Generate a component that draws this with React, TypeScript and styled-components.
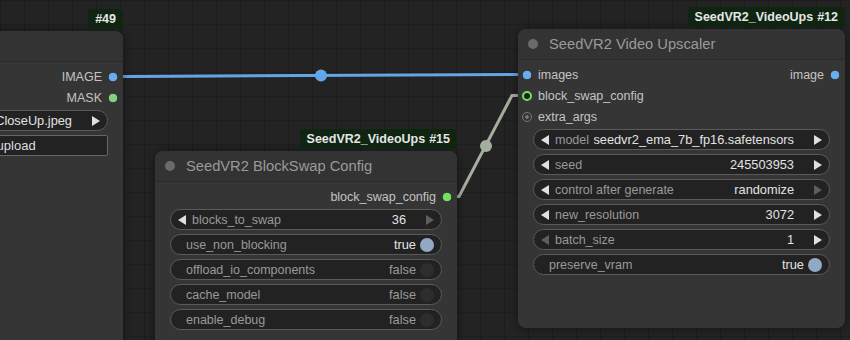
import React from 'react';
import styled, { createGlobalStyle } from 'styled-components';

const GlobalStyle = createGlobalStyle`
  html, body { margin: 0; padding: 0; background: #222; }
  body { font-family: "Liberation Sans", Arial, sans-serif; }
`;

const Canvas = styled.div`
  position: relative;
  width: 850px;
  height: 340px;
  overflow: hidden;
  background-color: #232323;
  background-image:
    linear-gradient(to right, rgba(0, 0, 0, 0.2) 1px, transparent 1px),
    linear-gradient(to bottom, rgba(0, 0, 0, 0.14) 1px, transparent 1px);
  background-size: 24px 24px;
`;

const Links = styled.svg`
  position: absolute;
  inset: 0;
`;

const Node = styled.div<{ $x: number; $y: number; $w: number; $h: number }>`
  position: absolute;
  left: ${p => p.$x}px;
  top: ${p => p.$y}px;
  width: ${p => p.$w}px;
  height: ${p => p.$h}px;
  background: #353535;
  border-radius: 8px;
  box-shadow: 0 0 8px rgba(0, 0, 0, 0.45);
  display: flex;
  flex-direction: column;
`;

const Badge = styled.div`
  position: absolute;
  right: 0;
  bottom: calc(100% + 2px);
  height: 20px;
  padding: 0 7px;
  display: flex;
  align-items: center;
  gap: 4px;
  background: #0f2411;
  border-radius: 4px 4px 0 0;
  color: #e6e6e6;
  font-size: 12.5px;
  font-weight: bold;
  white-space: nowrap;
`;

const TitleBar = styled.div`
  height: 30px;
  flex: none;
  display: flex;
  align-items: center;
  gap: 11px;
  padding-left: 10px;
  background: #333;
  border-bottom: 1px solid #2a2a2a;
  border-radius: 8px 8px 0 0;
  color: #9a9a9a;
  font-size: 14.7px;
  white-space: nowrap;
`;

const TitleDot = styled.span`
  width: 10px;
  height: 10px;
  border-radius: 50%;
  background: #6a6a6a;
`;

const Slots = styled.div`
  padding-top: 4px;
  display: flex;
  flex-direction: column;
`;

const SlotRow = styled.div`
  height: 21px;
  display: flex;
  align-items: center;
  justify-content: space-between;
  font-size: 12.5px;
  color: #c4c4c4;
`;

const SlotIn = styled.div`
  display: flex;
  align-items: center;
  gap: 6px;
  padding-left: 4px;
`;

const SlotOut = styled.div`
  margin-left: auto;
  display: flex;
  align-items: center;
  gap: 6px;
  padding-right: 5px;
`;

type DotKind = 'image' | 'mask' | 'config' | 'configOut' | 'optional';

const dotStyles: Record<DotKind, string> = {
  image: 'background: radial-gradient(circle, #68aeee 0 4px, transparent 4.6px);',
  mask: 'background: radial-gradient(circle, #7ed47e 0 4px, transparent 4.6px);',
  configOut: 'background: radial-gradient(circle, #72e25e 0 4px, transparent 4.6px);',
  config: 'border: 2.5px solid #72e25e; background: #1e1e1e;',
  optional: 'border: 1px solid #787878; background: radial-gradient(circle, #787878 0 1.5px, transparent 2px);',
};

const SlotDot = styled.span<{ $kind: DotKind }>`
  width: 10px;
  height: 10px;
  box-sizing: border-box;
  border-radius: 50%;
  ${p => dotStyles[p.$kind]}
`;

const Widgets = styled.div`
  padding: 2px 15px 0;
  display: flex;
  flex-direction: column;
  gap: 4px;
`;

const Widget = styled.div`
  height: 21px;
  box-sizing: border-box;
  border: 1px solid #5a5a5a;
  border-radius: 11px;
  background: #222;
  display: flex;
  align-items: center;
  padding: 0 7px;
  font-size: 12.5px;
  white-space: nowrap;
  overflow: hidden;
`;

const ToggleRow = styled(Widget)`
  padding: 0 7px 0 15px;
`;

const UploadButton = styled.div`
  height: 21px;
  box-sizing: border-box;
  border: 1px solid #666;
  border-radius: 2px;
  background: #222;
  display: flex;
  align-items: center;
  justify-content: center;
  color: #ddd;
  font-size: 13px;
  white-space: nowrap;
`;

const Arrow = styled.span<{ $dir: 'left' | 'right'; $dim?: boolean }>`
  flex: none;
  width: 0;
  height: 0;
  border-top: 5px solid transparent;
  border-bottom: 5px solid transparent;
  ${p =>
    p.$dir === 'left'
      ? `border-right: 8px solid ${p.$dim ? '#5e5e5e' : '#e0e0e0'};`
      : `border-left: 8px solid ${p.$dim ? '#5e5e5e' : '#e0e0e0'};`}
`;

const Label = styled.span<{ $afterArrow?: boolean }>`
  flex: none;
  color: #999;
  margin-left: ${p => (p.$afterArrow ? 6 : 0)}px;
`;

const Value = styled.span<{ $muted?: boolean; $gap?: number }>`
  margin-left: auto;
  padding-left: 4px;
  margin-right: ${p => p.$gap ?? 20}px;
  color: ${p => (p.$muted ? '#9a9a9a' : '#e2e2e2')};
  font-size: 12.8px;
  min-width: 0;
  overflow: hidden;
`;

const Knob = styled.span<{ $on: boolean }>`
  flex: none;
  width: 14px;
  height: 14px;
  border-radius: 50%;
  background: ${p => (p.$on ? '#92a9c6' : '#2d2d2d')};
`;

type NumberProps = { label: string; value: string; dimLeft?: boolean; dimRight?: boolean };

const NumberWidget = ({ label, value, dimLeft, dimRight }: NumberProps) => (
  <Widget>
    <Arrow $dir="left" $dim={dimLeft} />
    <Label $afterArrow>{label}</Label>
    <Value>{value}</Value>
    <Arrow $dir="right" $dim={dimRight} />
  </Widget>
);

const Toggle = ({ label, on }: { label: string; on: boolean }) => (
  <ToggleRow>
    <Label>{label}</Label>
    <Value $muted={!on} $gap={4}>{on ? 'true' : 'false'}</Value>
    <Knob $on={on} />
  </ToggleRow>
);

const App = () => {
  return (
    <Canvas>
      <GlobalStyle />
      <Links width={850} height={340} viewBox="0 0 850 340">
        <path d="M115 76.5 L130 76.5 L512 74.5 L527 74.5" stroke="#62a6e6" strokeWidth={3} fill="none" />
        <circle cx={321} cy={75.5} r={6} fill="#62a6e6" />
        <path d="M448 196.5 L459 196.5 L512 95.5 L527 95.5" stroke="#a4ae9e" strokeWidth={3} fill="none" />
        <circle cx={486} cy={146} r={6} fill="#a4ae9e" />
      </Links>

      <Node $x={-171} $y={31} $w={294} $h={330}>
        <Badge>#49</Badge>
        <TitleBar>
          <TitleDot />
          Load Image
        </TitleBar>
        <Slots>
          <SlotRow>
            <SlotOut>IMAGE<SlotDot $kind="image" /></SlotOut>
          </SlotRow>
          <SlotRow>
            <SlotOut>MASK<SlotDot $kind="mask" /></SlotOut>
          </SlotRow>
        </Slots>
        <Widgets>
          <NumberWidget label="image" value="portrait_CloseUp.jpeg" />
          <UploadButton>choose file to upload</UploadButton>
        </Widgets>
      </Node>

      <Node $x={155} $y={151} $w={302} $h={210}>
        <Badge>SeedVR2_VideoUps <span>#15</span></Badge>
        <TitleBar>
          <TitleDot />
          SeedVR2 BlockSwap Config
        </TitleBar>
        <Slots>
          <SlotRow>
            <SlotOut>block_swap_config<SlotDot $kind="configOut" /></SlotOut>
          </SlotRow>
        </Slots>
        <Widgets>
          <NumberWidget label="blocks_to_swap" value="36" dimRight />
          <Toggle label="use_non_blocking" on />
          <Toggle label="offload_io_components" on={false} />
          <Toggle label="cache_model" on={false} />
          <Toggle label="enable_debug" on={false} />
        </Widgets>
      </Node>

      <Node $x={518} $y={29} $w={327} $h={299}>
        <Badge>SeedVR2_VideoUps <span>#12</span></Badge>
        <TitleBar>
          <TitleDot />
          SeedVR2 Video Upscaler
        </TitleBar>
        <Slots>
          <SlotRow>
            <SlotIn><SlotDot $kind="image" />images</SlotIn>
            <SlotOut>image<SlotDot $kind="image" /></SlotOut>
          </SlotRow>
          <SlotRow>
            <SlotIn><SlotDot $kind="config" />block_swap_config</SlotIn>
          </SlotRow>
          <SlotRow>
            <SlotIn><SlotDot $kind="optional" />extra_args</SlotIn>
          </SlotRow>
        </Slots>
        <Widgets>
          <NumberWidget label="model" value="seedvr2_ema_7b_fp16.safetensors" />
          <NumberWidget label="seed" value="245503953" />
          <NumberWidget label="control after generate" value="randomize" dimRight />
          <NumberWidget label="new_resolution" value="3072" />
          <NumberWidget label="batch_size" value="1" dimLeft />
          <Toggle label="preserve_vram" on />
        </Widgets>
      </Node>
    </Canvas>
  );
};

export default App;
